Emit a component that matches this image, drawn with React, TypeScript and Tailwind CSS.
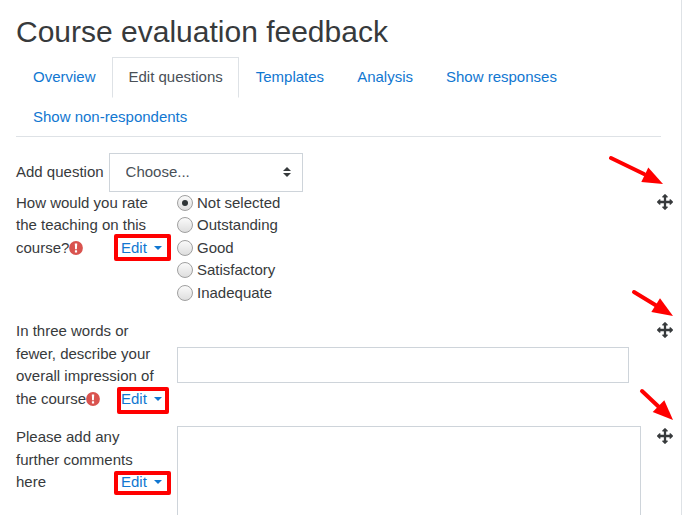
import type { ReactNode } from "react";

const tabs = ["Overview", "Edit questions", "Templates", "Analysis", "Show responses", "Show non-respondents"];
const ratings = ["Not selected", "Outstanding", "Good", "Satisfactory", "Inadequate"];

function RequiredIcon() {
  return (
    <svg role="img" aria-label="Required" viewBox="0 0 14 14" className="inline-block size-3.5 align-[-2px]">
      <circle cx="7" cy="7" r="6.9" fill="#d9534f" />
      <path d="M5.8 2.4h2.4L7.9 8.2H6.1z" fill="#fff" />
      <rect x="5.9" y="9.3" width="2.2" height="2.2" rx="0.3" fill="#fff" />
    </svg>
  );
}

function MoveIcon() {
  return (
    <svg viewBox="0 0 1792 1792" className="size-4 fill-[#373a3c]" aria-hidden="true">
      <path d="M1792 896q0 26-19 45l-256 256q-19 19-45 19t-45-19-19-45v-128h-384v384h128q26 0 45 19t19 45-19 45l-256 256q-19 19-45 19t-45-19l-256-256q-19-19-19-45t19-45 45-19h128v-384h-384v128q0 26-19 45t-45 19-45-19l-256-256q-19-19-19-45t19-45l256-256q19-19 45-19t45 19 19 45v128h384v-384h-128q-26 0-45-19t-19-45 19-45l256-256q19-19 45-19t45 19l256 256q19 19 19 45t-19 45-45 19h-128v384h384v-128q0-26 19-45t45-19 45 19l256 256q19 19 19 45z" />
    </svg>
  );
}

/* Red pointer drawn over the page; coordinates are relative to a 64px box that ends at the handle. */
function Arrow({ line, head }: { line: string; head: string }) {
  return (
    <svg viewBox="0 0 64 64" className="pointer-events-none absolute right-0 bottom-0 size-16 max-w-none" aria-hidden="true">
      <path d={line} stroke="#f00" strokeWidth="4" strokeLinecap="round" />
      <path d={head} fill="#f00" />
    </svg>
  );
}

type QuestionProps = {
  text: string;
  htmlFor?: string;
  required?: boolean;
  highlight: string;
  line: string;
  head: string;
  children: ReactNode;
};

function Question({ text, htmlFor, required, highlight, line, head, children }: QuestionProps) {
  return (
    <div className="-mr-3 flex gap-[15px]">
      <div className="w-[146px] shrink-0">
        {htmlFor ? <label htmlFor={htmlFor}>{text}</label> : <span id="rating-label">{text}</span>}
        {required && <RequiredIcon />}
        <button type="button" className="relative float-right flex w-[41px] items-center justify-between text-[#1177d1]">
          Edit
          <span className="border-x-4 border-t-4 border-x-transparent border-t-[#1177d1]" />
          <span className={`pointer-events-none absolute rounded-xs border-4 border-[#f00] ${highlight}`} />
        </button>
      </div>
      <div className="flex min-w-0 flex-1 items-center">{children}</div>
      <div className="relative h-[19px] w-4 shrink-0">
        <button type="button" aria-label="Move this question" className="block pt-0.5">
          <MoveIcon />
        </button>
        <Arrow line={line} head={head} />
      </div>
    </div>
  );
}

export default function App() {
  return (
    <div className="h-screen overflow-hidden bg-white pr-[3px] font-['Liberation_Sans',Arial,sans-serif] text-[15px] leading-normal text-[#373a3c]">
      <main className="min-h-full border-r border-[#dee2e6] pr-5 pl-4 pt-3.5">
        <h1 className="mb-[7px] text-[30px] leading-9">Course evaluation feedback</h1>
        <nav className="mb-4 flex flex-wrap border-b border-[#dee2e6]">
          {tabs.map((tab) => (
            <a
              key={tab}
              href="#"
              className={
                tab === "Edit questions"
                  ? "-mb-px border border-[#dee2e6] border-b-white bg-white py-2 pr-[15px] pl-4 text-[#495057]"
                  : "-mb-px border border-transparent py-2 pr-[15px] pl-4 text-[#1177d1]"
              }
            >
              {tab}
            </a>
          ))}
        </nav>
        <form>
          <div className="flex items-center gap-[5px]">
            <label htmlFor="add-question">Add question</label>
            <div className="relative">
              <select
                id="add-question"
                className="block w-[194px] appearance-none border border-[#ced4da] bg-white px-4 py-[7px] text-[#495057]"
              >
                <option>Choose...</option>
              </select>
              <svg viewBox="0 0 8 10" className="pointer-events-none absolute top-3.5 right-3 h-2.5 w-2" aria-hidden="true">
                <path d="M4 0l4 4H0zM4 10L0 6h8z" fill="#373a3c" />
              </svg>
            </div>
          </div>
          <div className="flex flex-col gap-4">
            <Question
              text="How would you rate the teaching on this course?"
              required
              highlight="-top-[3px] -right-[9px] -bottom-[2px] -left-[7px]"
              line="M2 11L35 27"
              head="M54 37L39.3 20.5L32.3 35z"
            >
              <div role="radiogroup" aria-labelledby="rating-label">
                {ratings.map((rating, i) => (
                  <label key={rating} className="flex items-center gap-1">
                    <input
                      type="radio"
                      name="rating"
                      defaultChecked={i === 0}
                      className="grid size-4 appearance-none place-items-center rounded-full border border-[#a0a0a0] bg-linear-to-b from-[#fafafa] to-[#dedede] checked:before:size-1.5 checked:before:rounded-full checked:before:bg-[#2e3436]"
                    />
                    {rating}
                  </label>
                ))}
              </div>
            </Question>
            <Question
              text="In three words or fewer, describe your overall impression of the course"
              htmlFor="impression"
              required
              highlight="-top-px -right-[7px] -bottom-[4px] -left-[4px]"
              line="M25 17L48 31"
              head="M64 41L51 23.3L42.3 37z"
            >
              <input id="impression" type="text" className="mr-[13px] h-9 w-full border border-[#ced4da] px-3" />
            </Question>
            <Question
              text="Please add any further comments here"
              htmlFor="comments"
              highlight="top-0 -right-[9px] -bottom-px -left-[7px]"
              line="M33 10L51 27"
              head="M64 39L55.3 19.3L43.7 31z"
            >
              <textarea id="comments" className="mr-px h-40 w-full resize-none border border-[#ced4da] px-3 py-2" />
            </Question>
          </div>
        </form>
      </main>
    </div>
  );
}
